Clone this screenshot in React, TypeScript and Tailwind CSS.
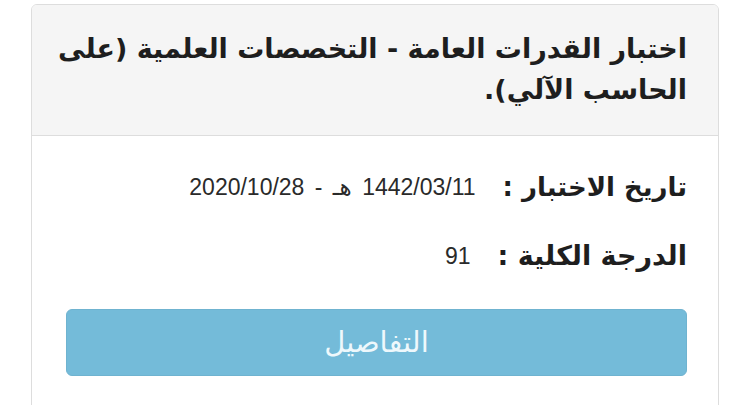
export default function App() {
  return (
    <div className="w-[750px] h-[405px] overflow-hidden bg-white" dir="rtl" style={{ fontFamily: '"DejaVu Sans", "Noto Sans", sans-serif' }}>
      <div className="mt-[4px] mr-[31px] ml-[31px] border border-[#dddddd] rounded-[6px] overflow-hidden h-[420px]">
        {/* Header */}
        <div className="bg-[#f5f5f5] border-b border-[#dddddd] h-[131px] pt-[23px] pr-[31px] pl-[12px]">
          <h2 className="text-[27px] font-bold leading-[41px] text-[#1e1e1e]">
            اختبار القدرات العامة - التخصصات العلمية (على الحاسب الآلي).
          </h2>
        </div>

        {/* Body */}
        <div className="pt-[33px] pr-[31px] pl-[34px]">
          <div className="flex items-center gap-[27px] h-[36px]">
            <span className="text-[26px] font-bold text-[#1e1e1e]">تاريخ الاختبار :</span>
            <span className="text-[23px] text-[#2a2a2a] [word-spacing:4px]" style={{ fontFamily: '"Liberation Sans", "DejaVu Sans", sans-serif' }}>
              1442/03/11 هـ - 2020/10/28
            </span>
          </div>
          <div className="flex items-center gap-[27px] h-[36px] mt-[33px]">
            <span className="text-[27px] font-bold text-[#1e1e1e]">الدرجة الكلية :</span>
            <span className="text-[23px] text-[#2a2a2a]" style={{ fontFamily: '"Liberation Sans", "DejaVu Sans", sans-serif' }}>91</span>
          </div>

          <button className="mt-[35px] w-full h-[67px] rounded-[6px] bg-[#74bbd9] border border-[#6fb3d0] text-[#eef8fc] text-[29px]">
            التفاصيل
          </button>
        </div>
      </div>
    </div>
  );
}
